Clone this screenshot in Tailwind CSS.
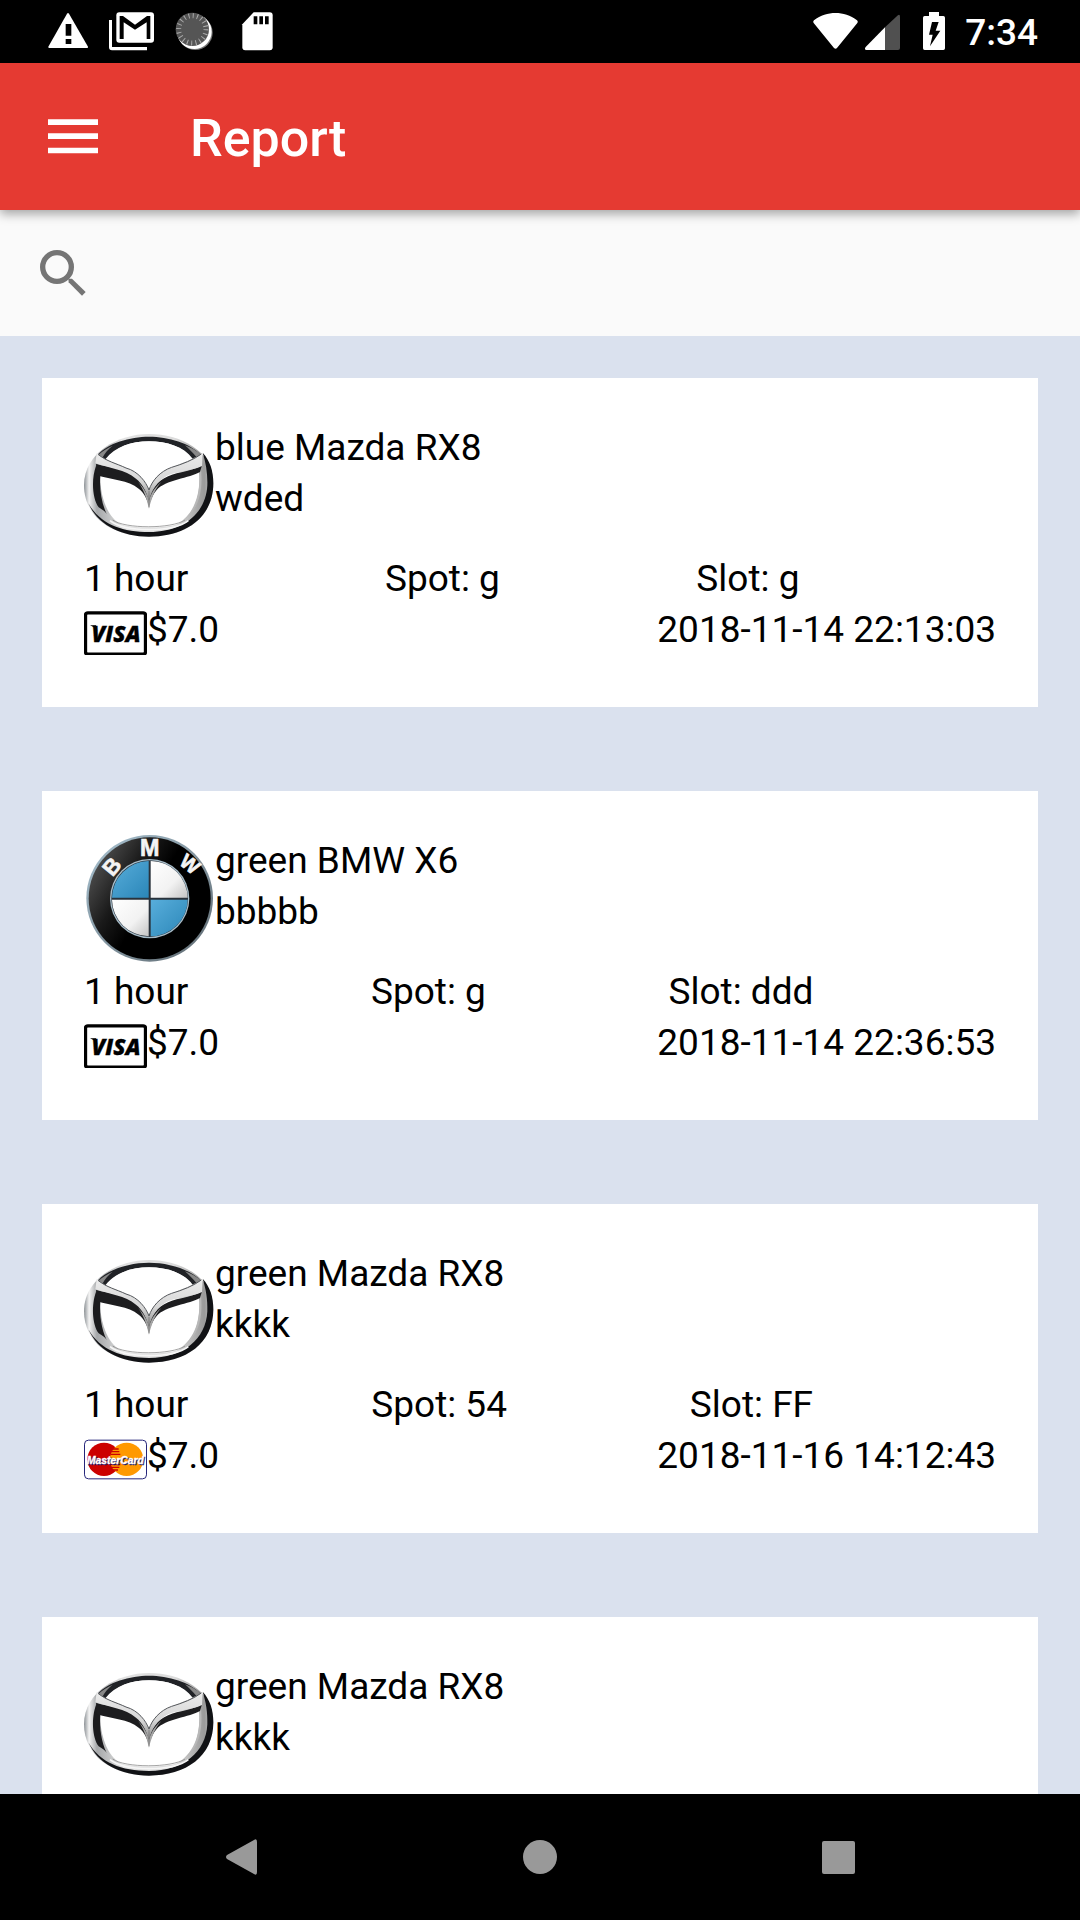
<!DOCTYPE html>
<html lang="en">
<head>
<meta charset="utf-8">
<meta name="viewport" content="width=device-width, initial-scale=1">
<title>Report</title>
<script src="https://cdn.jsdelivr.net/npm/@tailwindcss/browser@4"></script>
</head>
<body class="flex h-screen flex-col overflow-hidden bg-[#dae1ee] font-[Roboto,sans-serif] text-[37px] leading-[51px] text-black">

<!-- Shared logo artwork; kept rendered at zero size so its gradients resolve -->
<svg class="absolute size-0" aria-hidden="true">
  <defs>
    <linearGradient id="chrome" x1="0" y1="0" x2="1" y2="0">
      <stop offset="0" stop-color="#8d9296"/><stop offset=".04" stop-color="#f4f4f4"/><stop offset=".1" stop-color="#a5a7a9"/>
      <stop offset=".3" stop-color="#e2e2e2"/><stop offset=".7" stop-color="#dcdcdc"/><stop offset=".93" stop-color="#9a9a9a"/><stop offset="1" stop-color="#c8c8c8"/>
    </linearGradient>
    <linearGradient id="wing" x1="0" y1="0" x2="0" y2="1">
      <stop offset="0" stop-color="#ececec"/><stop offset=".6" stop-color="#d6d6d6"/><stop offset="1" stop-color="#8a8a8a"/>
    </linearGradient>
    <linearGradient id="bmwring" x1="0" y1="0.2" x2="1" y2="0.8">
      <stop offset="0" stop-color="#555"/><stop offset=".3" stop-color="#1a1a1a"/><stop offset=".5" stop-color="#000"/>
    </linearGradient>
    <linearGradient id="bmwrim" x1="0" y1="0" x2="1" y2="1">
      <stop offset="0" stop-color="#a9c3d2"/><stop offset="1" stop-color="#5d686f"/>
    </linearGradient>
    <linearGradient id="bmwblue" x1="0" y1="0" x2="1" y2="1">
      <stop offset="0" stop-color="#58aedb"/><stop offset="1" stop-color="#2b86b8"/>
    </linearGradient>
    <linearGradient id="bmwwhite" x1="0" y1="0" x2="1" y2="1">
      <stop offset="0" stop-color="#fff"/><stop offset=".6" stop-color="#f2f2f2"/><stop offset="1" stop-color="#c4c4c4"/>
    </linearGradient>
    <symbol id="mazda" viewBox="42 6 393 393">
      <path d="M237 42C330 42 430 92 430 190C430 292 348 350 237 350C126 350 42 290 42 196C42 98 144 42 237 42Z" fill="url(#chrome)"/>
      <path d="M398 98C420 122 430 152 430 190C430 292 348 350 237 350C150 350 82 312 55 250C90 312 155 336 237 336C340 336 408 280 412 196C413 160 408 130 398 98Z" fill="#111215"/>
      <path d="M84 104C112 70 180 50 237 50C295 50 362 70 392 104L366 116C340 80 290 64 237 64C184 64 136 80 108 120Z" fill="#202226"/>
      <path d="M345 76C365 83 382 94 395 106L380 112C366 96 356 85 345 76ZM84 106C96 94 112 84 128 77C114 88 105 98 98 112Z" fill="#888"/>
      <path d="M106 118C136 80 184 64 237 64C290 64 342 80 368 116C325 135 290 140 237 208C190 135 145 138 106 118Z" fill="#fff"/>
      <path d="M90 165L388 155C392 225 375 285 325 311C290 326 185 326 150 311C112 290 90 230 90 165Z" fill="#fff"/>
      <path d="M78 138C64 175 66 235 86 262C98 270 105 273 110 282C94 248 88 208 91 168L102 150Z" fill="#1b1b1d"/>
      <path d="M392 140C400 205 392 275 325 311C378 276 392 215 387 155Z" fill="#b8b8b8"/>
      <path d="M128 300C165 327 305 327 345 300" fill="none" stroke="#777" stroke-width="2"/>
      <path d="M120 302C165 338 310 338 355 302" fill="none" stroke="#f6f6f6" stroke-width="5"/>
      <path d="M78 132C115 142 180 146 206 176L234 222L240 222C256 190 280 170 320 160C350 154 375 148 396 136L390 156C360 174 285 180 260 210C248 224 242 240 237 256C230 236 222 218 206 206C175 180 125 180 80 166Z" fill="#1d1d1f"/>
      <path d="M80 98C104 122 135 130 168 144C205 154 228 186 237 210C246 182 270 154 305 142C340 132 375 118 398 98L396 138C365 154 320 152 290 168C262 184 244 210 237 244C230 216 218 192 198 176C165 148 120 146 76 130Z" fill="url(#wing)"/>
      <path d="M84 103C110 124 138 130 168 144C205 154 228 186 237 210C246 182 270 154 305 142C338 132 370 120 394 102" fill="none" stroke="#55585c" stroke-width="3"/>
      <path d="M204 186C222 203 232 224 237 242C242 222 254 202 274 186C254 206 244 238 237 266C230 238 222 208 204 186Z" fill="#a6a6a6"/>
      <path d="M237 212V262" stroke="#6b6b6b" stroke-width="2"/>
    </symbol>
    <symbol id="bmw" viewBox="42 30 393 393">
      <circle cx="239" cy="220" r="190" fill="url(#bmwrim)"/>
      <circle cx="239" cy="220" r="183" fill="url(#bmwring)"/>
      <circle cx="239" cy="221" r="119" fill="#a7bdca"/>
      <circle cx="239" cy="221" r="115" fill="#29323b"/>
      <path d="M236 218H126A112 112 0 0 1 236 108Z" fill="url(#bmwblue)"/>
      <path d="M242 218V108A112 112 0 0 1 353 218Z" fill="url(#bmwwhite)"/>
      <path d="M236 224V334A112 112 0 0 1 126 224Z" fill="url(#bmwwhite)"/>
      <path d="M242 224H353A112 112 0 0 1 242 334Z" fill="url(#bmwblue)"/>
      <g fill="#f4f4f4" stroke="#f4f4f4" stroke-width="2" font-family="Liberation Sans, sans-serif" font-weight="700" font-size="70" text-anchor="middle">
        <text x="239" y="94">M</text>
        <text transform="translate(143 139) rotate(-50)" font-size="66">B</text>
        <text transform="translate(347 134) rotate(38)" font-size="60">W</text>
      </g>
    </symbol>
    <symbol id="visa" viewBox="42 12 189 153">
      <rect x="46.500" y="38.500" width="180" height="124" rx="7" fill="#fff" stroke="#000" stroke-width="10"/>
      <text x="138" y="125" text-anchor="middle" font-family="Open Sans, sans-serif" font-style="italic" font-weight="800" font-size="67" stroke="#000" stroke-width="1">VISA</text>
      <path d="M60 76H78L82 92Q74 81 60 76Z"/>
    </symbol>
    <symbol id="mastercard" viewBox="42 0 189 153">
      <rect x="43.500" y="30.500" width="186" height="116" rx="12" fill="#fff" stroke="#25257a" stroke-width="3"/>
      <circle cx="102" cy="88" r="50" fill="#c00"/>
      <circle cx="170" cy="88" r="50" fill="#f90"/>
      <path d="M128 57H146M124 65H148M122 73H151M122 104H151M124 112H148M128 120H144" stroke="#c00" stroke-width="4"/>
      <g font-family="Liberation Sans, sans-serif" font-style="italic" font-weight="700" font-size="31" text-anchor="middle">
        <text x="139" y="104" fill="#1c1c6c" stroke="#1c1c6c">MasterCard</text>
        <text x="136" y="101" fill="#fff" stroke="#fff">MasterCard</text>
      </g>
    </symbol>
  </defs>
</svg>

<!-- System status bar -->
<div class="flex h-[63px] shrink-0 items-center justify-between bg-black pr-[42px] pl-9 text-white">
  <div class="flex">
    <svg class="h-[39px] w-[63px]" viewBox="108 36 189 117" fill="#fff" role="img" aria-label="Warning">
      <path d="M201 41Q204 37 207 41L264 140Q265 144 261 144H148Q144 144 145 140Z"/>
      <path d="M197 72h17v35h-17zM197 117h17v15h-17z" fill="#000"/>
    </svg>
    <svg class="h-[39px] w-[63px]" viewBox="297 36 189 117" fill="#fff" role="img" aria-label="Mail">
      <path d="M327 60h9v81h105v10H336q-9 0-9-9z"/>
      <rect x="349" y="37" width="113" height="91" rx="9"/>
      <path d="M359 117V48H369L405 74L441 48H451V117H440V67L405 89L371 67V117Z" fill="#000"/>
    </svg>
    <svg class="h-[39px] w-[63px]" viewBox="486 36 189 117" role="img" aria-label="Syncing">
      <circle cx="586" cy="98" r="52" fill="#777"/>
      <circle cx="583" cy="95" r="52" fill="#fff"/>
      <circle cx="577" cy="88" r="50" fill="#555"/>
      <circle cx="577" cy="88" r="41" fill="none" stroke="#aaa" stroke-width="15" stroke-dasharray="3 9.880"/>
    </svg>
    <svg class="h-[39px] w-[63px]" viewBox="675 36 189 117" fill="#fff" role="img" aria-label="SD card">
      <path d="M761 37H809Q818 37 818 46V142Q818 151 809 151H736Q727 151 727 142V73Z"/>
      <path d="M761 49h11v24h-11zM778 49h11v24h-11zM795 49h11v24h-11z" fill="#000"/>
    </svg>
  </div>
  <div class="flex items-center">
    <svg class="h-[39px] w-[45px]" viewBox="98 36 135 117" fill="#fff" role="img" aria-label="Wi-Fi">
      <path d="M100 69Q97 65 101 61C140 32 191 32 230 61Q234 65 231 69L170 144Q166 149 161 144Z"/>
    </svg>
    <svg class="ml-[7px] h-[39px] w-[35px]" viewBox="255 36 105 117" role="img" aria-label="Signal">
      <path d="M352 47Q360 41 360 50V144Q360 150 354 150H315V82Z" fill="#505050"/>
      <path d="M315 82V150H259Q252 148 257 141Z" fill="#fff"/>
    </svg>
    <svg class="ml-[23px] h-[39px] w-[22px]" viewBox="429 36 66 117" role="img" aria-label="Battery charging">
      <path d="M447 36h30v12h13q5 0 5 5v92q0 5-5 5h-56q-5 0-5-5V53q0-5 5-5h13z" fill="#fff"/>
      <path d="M456 66H476L467 92H481L450 139L458 104H447Z" fill="#000"/>
    </svg>
    <span class="ml-5 pt-[2px] font-medium">7:34</span>
  </div>
</div>

<!-- App bar -->
<header class="relative z-10 flex h-[147px] shrink-0 items-center bg-[#e53a32] pl-12 text-white shadow-[0_4px_10px_rgba(0,0,0,0.35)]">
  <button type="button" aria-label="Open menu" class="mr-[92px]">
    <svg class="h-9 w-[50px]" viewBox="0 0 150 108" fill="#fff"><path d="M0 1h150v17H0zM0 43h150v17H0zM0 86h150v17H0z"/></svg>
  </button>
  <h1 class="pt-1 text-[52px] leading-[60px] font-medium">Report</h1>
</header>

<!-- Search -->
<label class="flex h-[126px] shrink-0 items-center gap-6 bg-[#fafafa] px-10">
  <svg class="size-[46px]" viewBox="120 150 138 138" fill="none" stroke="#757575" role="img" aria-label="Search">
    <circle cx="171" cy="201" r="43" stroke-width="16"/>
    <path d="M205 236H216L257 276L246 287L206 247Z" fill="#757575" stroke="none"/>
  </svg>
  <input type="search" aria-label="Search reports" class="min-w-0 flex-1 bg-transparent outline-none">
</label>

<!-- Report list -->
<main class="flex min-h-0 flex-1 flex-col gap-[84px] overflow-y-auto px-[42px] pt-[42px] [scrollbar-width:none]">
  <article class="min-h-[329px] shrink-0 bg-white px-[42px] pt-11">
    <div class="flex">
      <svg class="size-[131px]" role="img" aria-label="Mazda"><use href="#mazda"/></svg>
      <div><h2>blue Mazda RX8</h2><p>wded</p></div>
    </div>
    <div class="flex justify-between after:content-['']"><span>1 hour</span><span>Spot: g</span><span>Slot: g</span></div>
    <div class="flex justify-between">
      <span class="flex"><svg class="h-[51px] w-[63px]" role="img" aria-label="Visa"><use href="#visa"/></svg>$7.0</span>
      <time datetime="2018-11-14T22:13:03">2018-11-14 22:13:03</time>
    </div>
  </article>

  <article class="min-h-[329px] shrink-0 bg-white px-[42px] pt-11">
    <div class="flex">
      <svg class="size-[131px]" role="img" aria-label="BMW"><use href="#bmw"/></svg>
      <div><h2>green BMW X6</h2><p>bbbbb</p></div>
    </div>
    <div class="flex justify-between after:content-['']"><span>1 hour</span><span>Spot: g</span><span>Slot: ddd</span></div>
    <div class="flex justify-between">
      <span class="flex"><svg class="h-[51px] w-[63px]" role="img" aria-label="Visa"><use href="#visa"/></svg>$7.0</span>
      <time datetime="2018-11-14T22:36:53">2018-11-14 22:36:53</time>
    </div>
  </article>

  <article class="min-h-[329px] shrink-0 bg-white px-[42px] pt-11">
    <div class="flex">
      <svg class="size-[131px]" role="img" aria-label="Mazda"><use href="#mazda"/></svg>
      <div><h2>green Mazda RX8</h2><p>kkkk</p></div>
    </div>
    <div class="flex justify-between after:content-['']"><span>1 hour</span><span>Spot: 54</span><span>Slot: FF</span></div>
    <div class="flex justify-between">
      <span class="flex"><svg class="h-[51px] w-[63px]" role="img" aria-label="MasterCard"><use href="#mastercard"/></svg>$7.0</span>
      <time datetime="2018-11-16T14:12:43">2018-11-16 14:12:43</time>
    </div>
  </article>

  <article class="min-h-[329px] shrink-0 bg-white px-[42px] pt-11">
    <div class="flex">
      <svg class="size-[131px]" role="img" aria-label="Mazda"><use href="#mazda"/></svg>
      <div><h2>green Mazda RX8</h2><p>kkkk</p></div>
    </div>
  </article>
</main>

<!-- System navigation -->
<nav class="flex h-[126px] shrink-0 justify-center bg-black">
  <button type="button" aria-label="Back" class="flex w-[298px] items-center justify-center">
    <svg class="h-9 w-8" viewBox="0 0 32 36" fill="#999"><path d="M28 1Q31-1 31 3V33Q31 37 28 35L1 20Q-1 18 1 16Z"/></svg>
  </button>
  <button type="button" aria-label="Home" class="flex w-[298px] items-center justify-center">
    <svg class="size-[34px]" viewBox="0 0 34 34" fill="#999"><circle cx="17" cy="17" r="17"/></svg>
  </button>
  <button type="button" aria-label="Recent apps" class="flex w-[298px] items-center justify-center">
    <svg class="size-[33px]" viewBox="0 0 33 33" fill="#999"><rect width="33" height="33" rx="2"/></svg>
  </button>
</nav>
</body>
</html>
